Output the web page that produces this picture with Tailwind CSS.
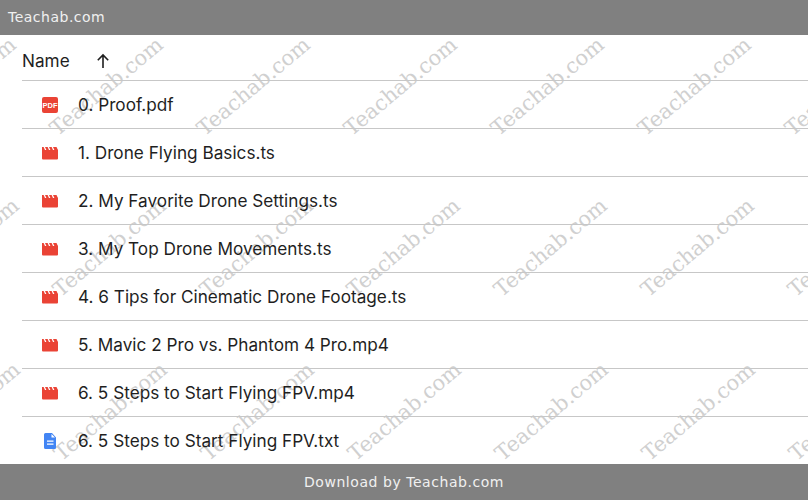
<!DOCTYPE html>
<html lang="en">
<head>
    <meta charset="UTF-8"/>
    <title>Teachab.com</title>
    <script src="https://cdn.jsdelivr.net/npm/@tailwindcss/browser@4"></script>
</head>
<body class="bg-white">
<div class="relative w-[808px] h-[500px] overflow-hidden flex flex-col">
    <!-- watermark -->
    <div id="wm" class="absolute inset-x-0 top-[35px] h-[429px] overflow-hidden pointer-events-none"></div>

    <!-- top bar -->
    <header class="relative h-[35px] shrink-0 bg-[#808080] flex items-center pl-2 text-[14px] tracking-[0.5px] text-[#f0f0f0] font-['DejaVu_Sans',sans-serif]">Teachab.com</header>

    <main class="relative flex-1 pl-[22px] text-[#1f1f1f] font-['Inter',sans-serif] text-[17.2px] overflow-hidden">
        <!-- column header -->
        <div class="h-[46px] pt-[6px] border-b border-[#c7c7c7] flex items-center">
            <span class="w-[73px]">Name</span>
            <svg class="w-4 h-4" viewBox="0 0 16 16" fill="none" stroke="#1f1f1f" stroke-width="1.6"><path d="M8 15V2M2.800 7.200 8 2l5.200 5.200"/></svg>
        </div>

        <!-- files -->
        <div class="h-[48px] pt-[1px] border-b border-[#c7c7c7] flex items-center">
            <svg class="w-4 h-4 ml-5 mr-5 shrink-0" viewBox="0 0 16 16"><rect width="16" height="16" rx="2" fill="#ea4335"/><text x="8" y="10.800" text-anchor="middle" font-size="7.500" font-weight="700" font-family="Liberation Sans" fill="#fff">PDF</text></svg>
            <span>0. Proof.pdf</span>
        </div>
        <div class="h-[48px] pt-[1px] border-b border-[#c7c7c7] flex items-center">
            <svg class="w-4 h-4 ml-5 mr-5 shrink-0" viewBox="0 0 16 16"><path fill="#ea4335" d="M0 2h1.600l1.400 3h1.400L3 2h2.600L7 5h1.400L7 2h2.600L11 5h1.400L11 2h3.500L16 5v8.500a1 1 0 0 1-1 1H1a1 1 0 0 1-1-1z"/></svg>
            <span>1. Drone Flying Basics.ts</span>
        </div>
        <div class="h-[48px] pt-[1px] border-b border-[#c7c7c7] flex items-center">
            <svg class="w-4 h-4 ml-5 mr-5 shrink-0" viewBox="0 0 16 16"><path fill="#ea4335" d="M0 2h1.600l1.400 3h1.400L3 2h2.600L7 5h1.400L7 2h2.600L11 5h1.400L11 2h3.500L16 5v8.500a1 1 0 0 1-1 1H1a1 1 0 0 1-1-1z"/></svg>
            <span>2. My Favorite Drone Settings.ts</span>
        </div>
        <div class="h-[48px] pt-[1px] border-b border-[#c7c7c7] flex items-center">
            <svg class="w-4 h-4 ml-5 mr-5 shrink-0" viewBox="0 0 16 16"><path fill="#ea4335" d="M0 2h1.600l1.400 3h1.400L3 2h2.600L7 5h1.400L7 2h2.600L11 5h1.400L11 2h3.500L16 5v8.500a1 1 0 0 1-1 1H1a1 1 0 0 1-1-1z"/></svg>
            <span>3. My Top Drone Movements.ts</span>
        </div>
        <div class="h-[48px] pt-[1px] border-b border-[#c7c7c7] flex items-center">
            <svg class="w-4 h-4 ml-5 mr-5 shrink-0" viewBox="0 0 16 16"><path fill="#ea4335" d="M0 2h1.600l1.400 3h1.400L3 2h2.600L7 5h1.400L7 2h2.600L11 5h1.400L11 2h3.500L16 5v8.500a1 1 0 0 1-1 1H1a1 1 0 0 1-1-1z"/></svg>
            <span>4. 6 Tips for Cinematic Drone Footage.ts</span>
        </div>
        <div class="h-[48px] pt-[1px] border-b border-[#c7c7c7] flex items-center">
            <svg class="w-4 h-4 ml-5 mr-5 shrink-0" viewBox="0 0 16 16"><path fill="#ea4335" d="M0 2h1.600l1.400 3h1.400L3 2h2.600L7 5h1.400L7 2h2.600L11 5h1.400L11 2h3.500L16 5v8.500a1 1 0 0 1-1 1H1a1 1 0 0 1-1-1z"/></svg>
            <span>5. Mavic 2 Pro vs. Phantom 4 Pro.mp4</span>
        </div>
        <div class="h-[48px] pt-[1px] border-b border-[#c7c7c7] flex items-center">
            <svg class="w-4 h-4 ml-5 mr-5 shrink-0" viewBox="0 0 16 16"><path fill="#ea4335" d="M0 2h1.600l1.400 3h1.400L3 2h2.600L7 5h1.400L7 2h2.600L11 5h1.400L11 2h3.500L16 5v8.500a1 1 0 0 1-1 1H1a1 1 0 0 1-1-1z"/></svg>
            <span>6. 5 Steps to Start Flying FPV.mp4</span>
        </div>
        <div class="h-[48px] pt-[1px] border-b border-[#c7c7c7] flex items-center">
            <svg class="w-4 h-4 ml-5 mr-5 shrink-0" viewBox="0 0 16 16"><path fill="#4285f4" d="M3.500 0H10l4 4.500v10a1.500 1.500 0 0 1-1.500 1.500h-9A1.500 1.500 0 0 1 2 14.500V1.500A1.500 1.500 0 0 1 3.500 0z"/><path fill="#fff" d="M5 7.500h6.500v1.300H5zM5 10.500h6.500v1.300H5zM9.500 1v3.500H13z"/></svg>
            <span>6. 5 Steps to Start Flying FPV.txt</span>
        </div>
    </main>

    <footer class="relative h-[36px] shrink-0 bg-[#808080] flex items-center justify-center text-[14px] tracking-[0.55px] text-[#f0f0f0] font-['DejaVu_Sans',sans-serif]">Download by Teachab.com</footer>
</div>

<script>
    const wm = document.getElementById("wm");
    const rows = [[-40, 52], [-37, 213], [-36, 377]];
    rows.forEach(([startX, y]) => {
        for (let i = 0; i < 7; i++) {
            const s = document.createElement("span");
            s.textContent = "Teachab.com";
            s.className = "absolute whitespace-nowrap -rotate-[40deg] -translate-x-1/2 -translate-y-1/2 text-[21px] text-[#d0d0d0] font-['DejaVu_Serif',serif]";
            s.style.left = startX + i * 147 + "px";
            s.style.top = y + "px";
            wm.appendChild(s);
        }
    });
</script>
</body>
</html>
